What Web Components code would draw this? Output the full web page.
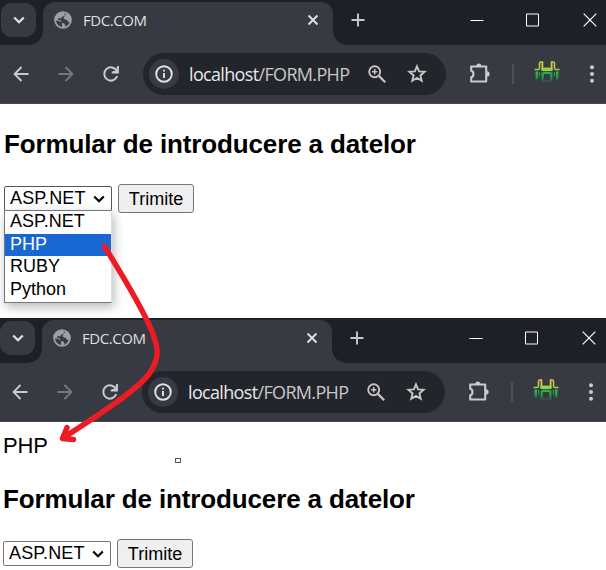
<!DOCTYPE html>
<html lang="ro"><head><meta charset="utf-8"><title>FDC.COM</title>
<style>
body{margin:0;width:606px;height:570px;overflow:hidden;background:#fff;position:relative;font-family:"Liberation Sans",Arial,sans-serif;color:#000}
</style></head><body>
<fdc-window>
 <fdc-form>
  <fdc-select open></fdc-select>
 </fdc-form>
</fdc-window>
<fdc-window second>
 <fdc-form result="PHP">
  <fdc-select></fdc-select>
 </fdc-form>
</fdc-window>
<fdc-arrow></fdc-arrow>
<script>
const define=(name,html,setup)=>customElements.define(name,class extends HTMLElement{
  connectedCallback(){ if(this.shadowRoot)return; const r=this.attachShadow({mode:'open'}); r.innerHTML=html; if(setup)setup(this,r); }
});

const icons={
 down:[12,8,'<path d="M1.2 1.500 6 6.300l4.800-4.800" stroke-width="2.200"/>','#e3e3e3'],
 globe:[18,18,'<circle cx="9" cy="9" r="7.900" stroke-width="1.900"/><path fill="currentColor" stroke="none" d="M9 1C4 1 1 4.600 1 9l5 1.300 2 2v4.500l2 .2 1.500-2.600-1.400-2.200H7.600L7 9.400l-3-.6V7.300h3.700V5.800l2.800-.9.500-2zM12.400 2.500l-2.700 4 .1 1.600 3.200.8 1.200 2.200 2.600.1L17 8l-2-4z"/>','#9aa0aa'],
 close:[12,12,'<path d="m1.500 1.500 9 9m0-9-9 9" stroke-width="1.900"/>','#e0e0df'],
 plus:[14,14,'<path d="M7 .5v13M.5 7h13" stroke-width="1.900"/>','#c7cad3'],
 min:[14,14,'<path d="M.5 7.500h13" stroke-width="1"/>','#fff'],
 max:[14,14,'<path d="M1 1.500h12v12H1z" stroke-width="1" transform="translate(-.5 -.5)"/>','#fff'],
 x:[14,14,'<path d="m.7.7 12.600 12.600m0-12.600L.7 13.300" stroke-width="1.200"/>','#fff'],
 back:[16,16,'<path d="M15.500 8H2m6.500-7L1.600 8l6.900 7" stroke-width="1.900"/>','#c7cad3'],
 forward:[16,16,'<path d="M.5 8H14M7.500 1l6.900 7-6.900 7" stroke-width="1.900"/>','#77777b'],
 reload:[16,16,'<path d="M14.200 10a6.600 6.600 0 1 1-.4-5" stroke-width="2"/><path d="M15 0v6.500H8.700M14.600 1v5H10" stroke-width="1.800"/>','#c7cad3'],
 info:[18,18,'<circle cx="9" cy="9" r="7.800" stroke-width="1.900"/><path d="M9 7.900v5M9 4.700v1.900" stroke-width="1.900"/>','#e3e3e3'],
 zoom:[18,18,'<circle cx="6.700" cy="6.700" r="5.500" stroke-width="1.900"/><path d="m10.900 10.900 6.300 6.300" stroke-width="2.200"/><path d="M6.700 4v5.400M4 6.700h5.400" stroke-width="1.500"/>','#c7c5c5'],
 star:[20,20,'<path d="M10 2.300 12.100 7.400l5.500.45-4.200 3.600 1.300 5.350L10 13.950 5.300 16.800l1.300-5.350-4.200-3.600L7.900 7.400z" stroke-width="1.900"/>','#c7c5c5'],
 puzzle:[22,22,'<path d="M2.200 4.500h15v15h-15v-4.200c3-.3 3-6.200 0-6.600z" stroke-width="2.100" stroke-linejoin="round"/><path fill="currentColor" stroke="none" d="M7.300 4a2.500 2.500 0 0 1 5 0zM18 9.300a2.600 2.600 0 0 1 0 5.200z"/>','#c7cad3'],
 dots:[6,20,'<g fill="currentColor" stroke="none"><circle cx="3" cy="3.200" r="2"/><circle cx="3" cy="10" r="2"/><circle cx="3" cy="16.800" r="2"/></g>','#c7cad3'],
 ext:[26,24,'<defs><linearGradient id="a" x1="0" y1="0" x2="0" y2="11" gradientUnits="userSpaceOnUse"><stop stop-color="#dcb94b"/><stop offset=".55" stop-color="#c9cf48"/><stop offset="1" stop-color="#7fd63f"/></linearGradient><linearGradient id="b" x1="0" y1="11" x2="0" y2="23" gradientUnits="userSpaceOnUse"><stop stop-color="#28c24c"/><stop offset=".5" stop-color="#20994a"/><stop offset="1" stop-color="#20994a" stop-opacity="0"/></linearGradient></defs><g stroke="url(#a)"><path d="M.5 9.600h3.700q1.300 0 1.300-1.500V3.300q0-1.200 1.200-1.200H9M25.500 9.600h-3.700q-1.300 0-1.300-1.500V3.300q0-1.200-1.200-1.200H17" stroke-width="1.500"/><path d="M8.400 1.400v8.500m9.200-8.500v8.500" stroke-width="1.800"/><path fill="url(#a)" stroke="none" d="M7.500 7.600h11V11h-11z"/></g><g stroke="url(#b)"><path d="M2.800 11.500v8M23.200 11.500v8" stroke-width="2.500"/><path d="M5.600 12v4.500m14.800-4.500v4.500" stroke-width="1"/><path d="M9.500 12.800h7M8.700 12.500V20q0 1.500 1.500 1.500h5.600q1.500 0 1.500-1.500v-7.500" stroke-width="2.200"/></g>','#35c54a']
};
customElements.define('fdc-icon',class extends HTMLElement{
  connectedCallback(){ if(this.shadowRoot)return; const [w,h,p,c]=icons[this.getAttribute('name')];
   this.attachShadow({mode:'open'}).innerHTML=`<style>:host{display:block;flex:none;width:${w}px;height:${h}px;color:${c}}svg{display:block}</style><svg width="${w}" height="${h}" viewBox="0 0 ${w} ${h}" fill="none" stroke="currentColor">${p}</svg>`; }
});

define('fdc-tabs',`<style>
:host{display:flex;height:45px;background:#1d2027;box-sizing:border-box;align-items:flex-start}
.drop{width:35px;height:34px;margin:3px 7px 0 1px;border-radius:11px;background:#383a43;display:grid;place-items:center;flex:none}
.tab{position:relative;display:flex;align-items:center;box-sizing:border-box;width:290px;height:43px;margin-top:2px;padding:0 14px 7px 11px;border-radius:12px 12px 0 0;background:#383a43;flex:none}
.tab::before,.tab::after{content:"";position:absolute;bottom:0;width:14px;height:14px}
.tab::before{left:-14px;background:radial-gradient(circle at 0 0,transparent 13.500px,#383a43 14px)}
.tab::after{right:-14px;background:radial-gradient(circle at 100% 0,transparent 13.500px,#383a43 14px)}
b{font:400 15px/20px "Open Sans",sans-serif;color:#dfdfdf;margin:0 auto 0 11px;letter-spacing:-.45px;white-space:nowrap}
.plus{margin:13px 0 0 18px}
.win{display:flex;margin:13px 9px 0 auto;gap:42px}
.win :last-child{margin-left:1px}
</style><div class="drop"><fdc-icon name="down"></fdc-icon></div><div class="tab"><fdc-icon name="globe"></fdc-icon><b>FDC.COM</b><fdc-icon name="close"></fdc-icon></div><fdc-icon class="plus" name="plus"></fdc-icon><div class="win"><fdc-icon name="min"></fdc-icon><fdc-icon name="max"></fdc-icon><fdc-icon name="x"></fdc-icon></div>`);

define('fdc-toolbar',`<style>
:host{display:flex;height:59px;box-sizing:border-box;background:#383a43;align-items:center;padding:0 0 1px 13px;border-bottom:1px solid #47464d}
.nav{display:flex;gap:29px;width:130px;flex:none}
.url{display:flex;align-items:center;box-sizing:border-box;width:303px;height:42px;border-radius:21px;background:#23252c;padding:0 19px 0 6px;flex:none}
.info{width:30px;height:30px;border-radius:50%;background:#383a43;display:grid;place-items:center;flex:none}
.text{font:18px/26px "Open Sans",sans-serif;color:#c9c9c9;white-space:nowrap;margin:0 auto 0 10px;letter-spacing:-.66px}
.text em{font-style:normal;color:#e8e8e8}
.star{margin-left:21px}
.puzzle{margin:-2px 0 0 23px}
i{width:2px;height:20px;background:#4f5159;margin:0 20px 0 21px;flex:none}
.dots{margin-left:29px}.ext{margin-top:-3px}
</style><div class="nav"><fdc-icon name="back"></fdc-icon><fdc-icon name="forward"></fdc-icon><fdc-icon name="reload"></fdc-icon></div>
<div class="url"><div class="info"><fdc-icon name="info"></fdc-icon></div><span class="text"><em>localhost</em>/FORM.PHP</span><fdc-icon name="zoom"></fdc-icon><fdc-icon class="star" name="star"></fdc-icon></div>
<fdc-icon class="puzzle" name="puzzle"></fdc-icon><i></i><fdc-icon class="ext" name="ext"></fdc-icon><fdc-icon class="dots" name="dots"></fdc-icon>`);

define('fdc-window',`<style>
:host{display:block;height:318px;width:606px}
:host([second]){height:252px;margin-left:-1px;width:607px}
:host([second]) fdc-tabs{padding-right:1px}
</style><fdc-tabs></fdc-tabs><fdc-toolbar></fdc-toolbar><slot></slot>`,(e,r)=>{ if(e.hasAttribute('second')) r.querySelector('fdc-tabs').style.paddingRight='1px'; });

define('fdc-form',`<style>
:host{display:block;padding:23px 0 0 4px}
:host([result]){padding-top:10px}
p{font-size:22px;line-height:28px;margin:0 0 22px;letter-spacing:-.1px}
p:empty{display:none}
h2{font-size:26px;line-height:34px;margin:0 0 23px;white-space:nowrap;letter-spacing:-.13px}
.row{display:flex;gap:6px;align-items:flex-start}
button{box-sizing:border-box;width:76px;height:29px;margin:0;padding:0;border:1px solid #767676;border-radius:3px;background:#efefef;font:18px/26px "Liberation Sans",Arial,sans-serif;color:#000}
</style><p></p><h2>Formular de introducere a datelor</h2><div class="row"><slot></slot><button>Trimite</button></div>`,(e,r)=>{r.querySelector('p').textContent=e.getAttribute('result')||''});

define('fdc-select',`<style>
:host{display:block;position:relative;width:108px;height:25px;margin-top:2px;font-size:18px}
.box{box-sizing:border-box;display:flex;align-items:center;justify-content:space-between;height:25px;border:1px solid #767676;border-radius:2px;padding:0 6px 0 5px;line-height:23px;background:#fff}
.box span{letter-spacing:.12px}
.box fdc-icon{color:#000}
:host([open]) .box{border-color:#555;border-radius:2px 2px 0 0}
ul{display:none;position:absolute;left:0;top:24px;width:108px;height:93px;box-sizing:border-box;border:1px solid #777;border-right-color:#ddd;margin:0;padding:0;list-style:none;background:#fff;box-shadow:2px 4px 10px rgba(0,0,0,.28)}
:host([open]) ul{display:block}
li{height:22.700px;line-height:21px;padding-left:5px}
li.on{background:#1967d2;color:#fff}
</style><div class="box"><span>ASP.NET</span><fdc-icon name="down"></fdc-icon></div><ul><li>ASP.NET</li><li class="on">PHP</li><li>RUBY</li><li>Python</li></ul>`);

define('fdc-arrow',`<style>:host{position:absolute;inset:0;pointer-events:none}svg{display:block}
.handle{position:absolute;left:175px;top:458px;box-sizing:border-box;width:6px;height:5px;border:1px solid #555;background:#fff}</style>
<svg width="606" height="570" fill="none" stroke="#ed1c24" stroke-width="5.500" stroke-linecap="round" stroke-linejoin="round"><path d="M104.500 246.500C121 273 141 306 151 329C159 348 160 358 149 374C136 391 94 418 63 438M67 427.500 62.500 438.500 73.500 439.500"/></svg>
<span class="handle"></span>`);
</script></body></html>
